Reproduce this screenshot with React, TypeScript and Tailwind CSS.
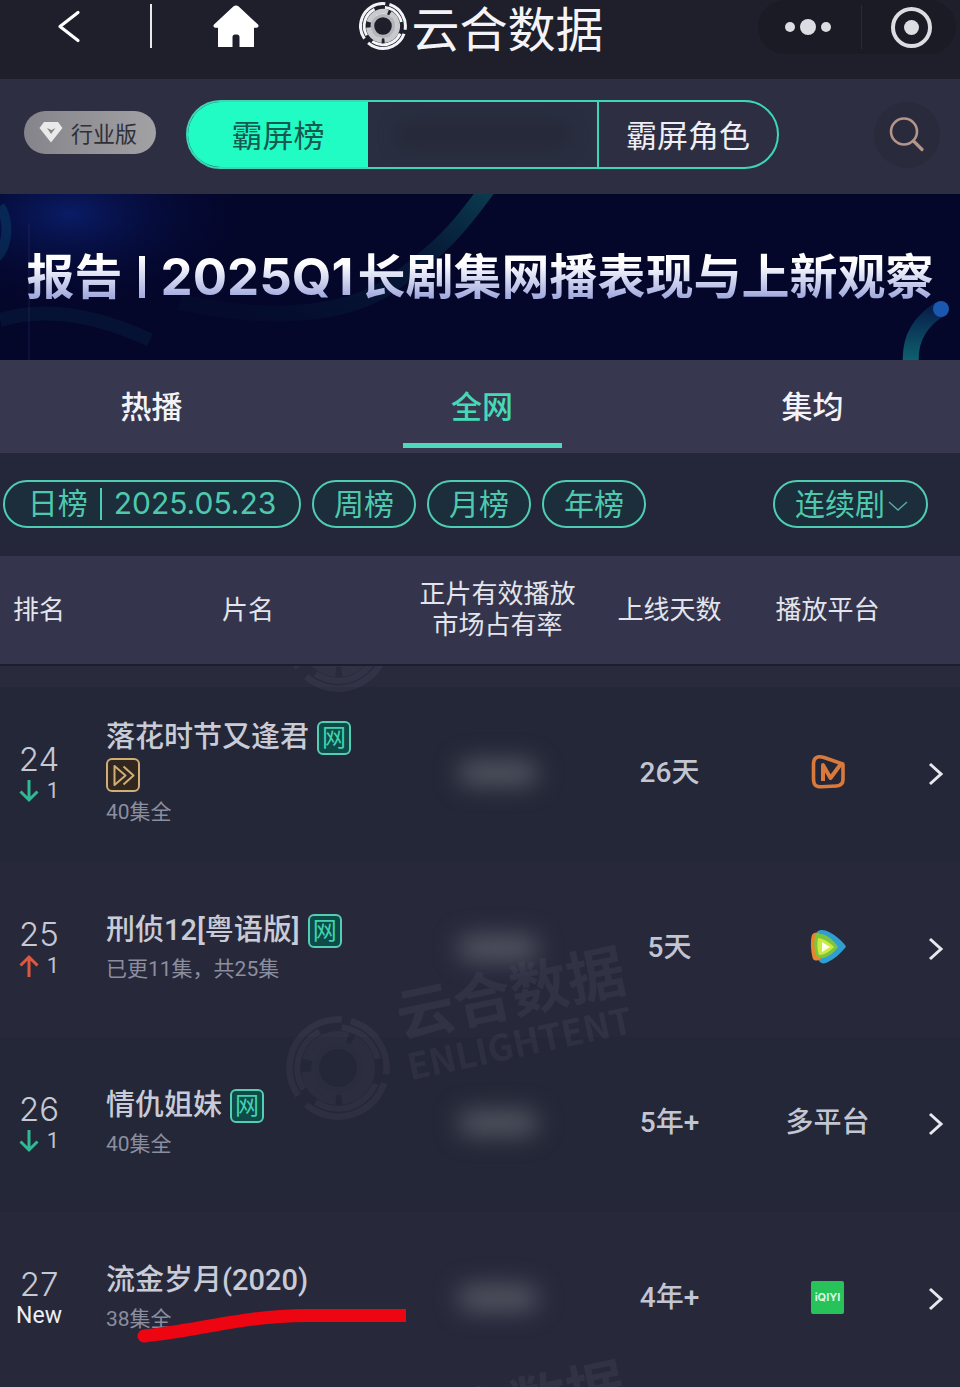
import clsx from "clsx";

type Show = {
  rank: number;
  change: "up" | "down" | "new";
  title: string;
  episodes: string;
  web?: boolean;
  vip?: boolean;
  days: string;
  platform: "mango" | "tencent" | "iqiyi" | "multi";
  marked?: boolean;
};

const shows: Show[] = [
  { rank: 24, change: "down", title: "落花时节又逢君", episodes: "40集全", web: true, vip: true, days: "26天", platform: "mango" },
  { rank: 25, change: "up", title: "刑侦12[粤语版]", episodes: "已更11集，共25集", web: true, days: "5天", platform: "tencent" },
  { rank: 26, change: "down", title: "情仇姐妹", episodes: "40集全", web: true, days: "5年+", platform: "multi" },
  { rank: 27, change: "new", title: "流金岁月(2020)", episodes: "38集全", days: "4年+", platform: "iqiyi", marked: true },
];

function SwirlLogo({ className }: { className?: string }) {
  return (
    <svg viewBox="0 0 48 48" className={className} fill="none" stroke="currentColor" aria-hidden="true">
      <circle cx="24" cy="24" r="22.4" strokeWidth="3" pathLength="100" strokeDasharray="31 4 36 3 23 3" transform="rotate(20 24 24)" />
      <circle cx="24" cy="24" r="18.8" strokeWidth="2.8" pathLength="100" strokeDasharray="26 9 20 10 28 7" transform="rotate(150 24 24)" />
      <circle cx="24" cy="24" r="14.6" strokeWidth="5" strokeOpacity="0.8" pathLength="100" strokeDasharray="40 3 22 6 26 3" transform="rotate(-60 24 24)" />
      <circle cx="24" cy="24" r="10.6" strokeWidth="3.6" strokeOpacity="0.7" />
    </svg>
  );
}

function NavBar() {
  return (
    <header className="grid h-[79px] grid-cols-[1fr_auto_1fr] items-start bg-[#1e1f2a]">
      <div className="flex h-[52px] items-center pl-14">
        <button aria-label="返回">
          <svg viewBox="0 0 26 34" className="h-[34px] w-[26px]" fill="none" stroke="white" strokeWidth="3.2" aria-hidden="true">
            <path d="M22 3.500 4 17.500 22 31.500" strokeLinecap="round" strokeLinejoin="round" />
          </svg>
        </button>
        <span className="ml-17 h-[44px] w-[2px] bg-[#e9e9ee]"></span>
        <button aria-label="首页" className="ml-15">
          <svg viewBox="0 0 48 44" className="h-11 w-12" fill="white" aria-hidden="true">
            <path d="M24 1.500c1 0 1.900.4 2.700 1.100L46 20.500c1.200 1.200.4 3.200-1.300 3.200H42V43H27.500V33c0-1.500-1-2.500-2.500-2.500h-2c-1.500 0-2.500 1-2.500 2.500v10H6V23.700H3.300C1.600 23.700.8 21.700 2 20.500L21.300 2.600C22.100 1.900 23 1.500 24 1.500z" />
          </svg>
        </button>
      </div>

      <h1 className="flex h-[52px] items-center gap-1 pl-[3px] text-[48px] leading-[52px] font-normal text-[#f4f4f8]">
        <SwirlLogo className="size-[48px]" />
        云合数据
      </h1>

      <div className="mr-1 flex h-[54px] items-center justify-self-end rounded-full bg-[#1b1b25]">
        <button aria-label="更多" className="flex h-full w-[103px] items-center justify-center gap-[5px] pr-1">
          <span className="size-[10px] rounded-full bg-[#dcdce2]"></span>
          <span className="size-4 rounded-full bg-[#dcdce2]"></span>
          <span className="size-[10px] rounded-full bg-[#dcdce2]"></span>
        </button>
        <span className="h-11 w-px bg-[#2b2b36]"></span>
        <button aria-label="关闭" className="flex h-full w-[94px] items-center justify-center pl-1">
          <span className="flex size-[41px] items-center justify-center rounded-full border-4 border-[#dcdce2]">
            <span className="size-[15px] rounded-full bg-[#dcdce2]"></span>
          </span>
        </button>
      </div>
    </header>
  );
}

function ModeBar() {
  return (
    <div className="flex h-[115px] items-center bg-[#2d2e42] pr-5 pb-1 pl-6">
      <button className="mb-[5px] flex h-[43px] w-[132px] items-center justify-center gap-2 rounded-full bg-linear-to-r from-[#84848a] to-[#a2a2a5] pr-1 text-[22px] text-[#2f3038]">
        <svg viewBox="0 0 24 22" className="h-[22px] w-6" aria-hidden="true">
          <path d="M5 1h14l4.500 6L12 21.500.5 7z" fill="#e9e9ea" />
          <path d="m8 7 4 6 4.500-6-4 2z" fill="#85858a" />
        </svg>
        行业版
      </button>

      <div className="ml-[30px] flex h-[69px] overflow-hidden rounded-full border-2 border-[#3ed6b4] text-[31px]">
        <button className="w-[180px] bg-[#20fcc4] text-[#16594f]">霸屏榜</button>
        <button aria-label="榜单" className="flex w-[229px] items-center justify-center bg-[#292e41]">
          <span className="h-7 w-44 rounded-full bg-[#262938] blur-sm"></span>
        </button>
        <button className="w-[180px] border-l-2 border-[#3ed6b4] text-[#eeeef4]">霸屏角色</button>
      </div>

      <button aria-label="搜索" className="ml-auto flex size-[66px] items-center justify-center rounded-full bg-[#292a3b]">
        <svg viewBox="0 0 36 36" className="size-9" fill="none" stroke="#b3958a" aria-hidden="true">
          <circle cx="15" cy="14.500" r="13" strokeWidth="2.600" />
          <path d="m24.500 24 8.500 8.500" strokeWidth="3.200" strokeLinecap="round" />
        </svg>
      </button>
    </div>
  );
}

function ReportBanner() {
  return (
    <a href="#report" className="relative flex h-[166px] items-center justify-center overflow-hidden bg-[#04062a]">
      <svg viewBox="0 0 960 166" preserveAspectRatio="xMidYMid slice" className="absolute inset-0 size-full" fill="none" aria-hidden="true">
        <defs>
          <radialGradient id="glow">
            <stop offset="0" stopColor="#0a1c66" />
            <stop offset="1" stopColor="#04062a" stopOpacity="0" />
          </radialGradient>
          <linearGradient id="ribbon" x1="0" y1="0.6" x2="1" y2="0">
            <stop offset="0" stopColor="#0a3a4c" stopOpacity="0.1" />
            <stop offset="0.6" stopColor="#0a3a4c" stopOpacity="0.35" />
            <stop offset="1" stopColor="#0d4a5a" stopOpacity="0.8" />
          </linearGradient>
          <linearGradient id="hook" x1="0" y1="1" x2="0" y2="0">
            <stop offset="0" stopColor="#0f6570" />
            <stop offset="1" stopColor="#08204c" />
          </linearGradient>
        </defs>
        <ellipse cx="70" cy="20" rx="190" ry="100" fill="url(#glow)" />
        <path d="M0 12c10 16 8 40-4 52" stroke="#0a4a70" strokeOpacity="0.4" strokeWidth="10" />
        <path d="M0 126C40 114 90 118 150 146" stroke="#083850" strokeOpacity="0.25" strokeWidth="14" />
        <path d="M180 108c90 20 170 14 215-20S455 40 488-6" stroke="url(#ribbon)" strokeWidth="16" />
        <path d="M29 30v136" stroke="#2a3668" strokeOpacity="0.5" />
        <path d="M911 170c-2-24 8-42 29-55" stroke="url(#hook)" strokeWidth="16" />
        <circle cx="941" cy="115" r="8" fill="#1a57ae" />
      </svg>
      <span className="relative flex items-center bg-linear-to-b from-white from-30% to-[#a3abde] to-80% bg-clip-text font-[Inter,'Noto_Sans_CJK_SC',sans-serif] text-[48px] leading-[66px] font-bold whitespace-nowrap text-transparent">
        报告
        <span className="mx-4 h-[42px] w-[6px] bg-linear-to-b from-white to-[#a3abde]"></span>
        <span className="mr-1 text-[51px]">2025Q1</span>
        长剧集网播表现与上新观察
      </span>
    </a>
  );
}

function ScopeTabs() {
  const tabs = ["热播", "全网", "集均"];
  return (
    <nav className="flex h-[93px] justify-between bg-[#37374f] pr-[68px] pb-[5px] pl-[72px] text-[31px] font-medium">
      {tabs.map((tab) => (
        <button
          key={tab}
          className={clsx(
            "w-[159px] border-b-[5px] pt-2",
            tab === "全网" ? "border-[#4fd8bb] text-[#45d9b6]" : "border-transparent text-[#f3f3f7]",
          )}
        >
          {tab}
        </button>
      ))}
    </nav>
  );
}

function Filters() {
  return (
    <div className="flex h-[103px] items-center gap-[11px] bg-[#242739] pr-8 pb-[2px] pl-[3px] font-[Inter,'Noto_Sans_CJK_SC',sans-serif] text-[30px] text-[#4fc9ae]">
      <button className="flex h-12 w-[298px] items-center justify-center gap-3 rounded-full border-2 border-[#4ecdb2] bg-[#1c2e3b]">
        日榜
        <span className="h-8 w-[2px] bg-[#4ecdb2]"></span>
        2025.05.23
      </button>
      {["周榜", "月榜", "年榜"].map((label) => (
        <button key={label} className="h-12 w-[104px] rounded-full border-2 border-[#4ecdb2] bg-[#1c2e3b] leading-[40px]">
          {label}
        </button>
      ))}
      <div className="relative ml-auto">
        <select
          aria-label="剧集类型"
          className="h-12 w-[155px] appearance-none rounded-full border-2 border-[#4ecdb2] bg-[#1c2e3b] pl-5 leading-[40px]"
        >
          <option>连续剧</option>
        </select>
        <svg viewBox="0 0 20 12" className="pointer-events-none absolute top-5 right-5 h-3 w-5" fill="none" stroke="#59a99c" strokeWidth="1.500" aria-hidden="true">
          <path d="m1 2 9 8 9-8" />
        </svg>
      </div>
    </div>
  );
}

function RankChange({ change }: { change: Show["change"] }) {
  if (change === "new") {
    return <span className="block text-[23px] leading-7 font-normal text-[#eeeff4]">New</span>;
  }
  const up = change === "up";
  return (
    <span className="flex h-7 items-center justify-center gap-2 text-[22px] font-normal text-[#c0c2cf]">
      <svg viewBox="0 0 20 24" className="h-6 w-5" fill="none" stroke={up ? "#e0573f" : "#2fb994"} strokeWidth="3" aria-hidden="true">
        <path d={up ? "M10 23V3M1.500 11.500 10 3l8.500 8.500" : "M10 1v20M1.500 12.500 10 21l8.500-8.500"} />
      </svg>
      1
    </span>
  );
}

function PlatformLogo({ platform }: { platform: Show["platform"] }) {
  if (platform === "multi") return <>多平台</>;
  if (platform === "iqiyi") {
    return (
      <span className="mb-1 inline-flex size-[33px] items-center justify-center rounded-[2px] bg-[#27c25a] align-middle font-[Inter,sans-serif] text-[11px] leading-4 font-bold text-[#d9f7e2]">
        iQIYI
      </span>
    );
  }
  if (platform === "tencent") {
    return (
      <svg viewBox="0 0 38 36" className="mb-1 inline h-9 w-[38px]" role="img" aria-label="腾讯视频">
        <path d="M8 3c3-3 8-2 12 0 6 3 12 8 16 13 1 1 1 2 0 3-5 6-11 11-17 14-3 2-7 2-9-1z" fill="#2e9fd0" />
        <path d="M3 6c1-2 4-3 7-2l2 26c-3 2-6 2-8 0C2 24 1 12 3 6z" fill="#e8862c" />
        <path d="M7 5c8-2 17 5 22 13-6 8-13 12-20 11C5 24 4 12 7 5z" fill="#7cc53f" />
        <path d="M9 9c7 1 12 5 16 9-4 4-9 8-15 8-2-5-2-12-1-17z" fill="#c9ea3f" />
        <path d="m13 13 8 5-8 5z" fill="#fdfff0" />
      </svg>
    );
  }
  return (
    <svg viewBox="0 0 36 36" className="mb-1 inline size-9" fill="none" stroke="#d97a3c" role="img" aria-label="芒果TV">
      <path d="M34 10.500 14 3.500C7 1.500 3.500 4 3.500 10v14c0 7 2 9 8 8.800l15-.8c4.500-.3 6.500-2.500 6.500-6.500V10" strokeWidth="3.600" strokeLinejoin="round" />
      <path d="M13 27V11l7.500 13 10-13.500" strokeWidth="4" strokeLinejoin="round" />
    </svg>
  );
}

function ShowRow({ show }: { show: Show }) {
  return (
    <tr className="h-[175px] bg-[#232737] odd:bg-[#27293b] *:pb-1">
      <td>
        <span className="block font-[Inter,sans-serif] text-[33px] leading-9 font-light text-[#c6c8d4]">{show.rank}</span>
        <RankChange change={show.change} />
      </td>
      <td className="relative pl-7 text-left">
        <div className="flex h-9 items-center gap-2 text-[29px] font-medium text-[#c9cbd7]">
          {show.title}
          {show.web && (
            <span className="flex size-[34px] items-center justify-center rounded-md border-2 border-[#55cdb2] bg-[#0d4a48] text-[24px] leading-[30px] font-normal text-[#41d3ae]">
              网
            </span>
          )}
        </div>
        {show.vip && (
          <svg viewBox="0 0 34 34" className="mt-[2px] size-[34px]" fill="none" stroke="#cfae78" strokeWidth="2" role="img" aria-label="会员">
            <rect x="1" y="1" width="32" height="32" rx="5" fill="#32271f" />
            <path d="M8.500 8v19l11-9.500zM17.500 8.500l10 9-10 9" strokeLinejoin="round" />
          </svg>
        )}
        <p className="mt-[6px] text-[21px] leading-7 font-normal text-[#8b8e9f]">{show.episodes}</p>
        {/* hand-drawn highlight under the title */}
        {show.marked && (
          <svg viewBox="0 0 272 36" className="absolute top-[95px] left-[58px] h-9 w-[272px]" fill="none" aria-hidden="true">
            <path d="M8 29C60 24 106 9 170 8.500H270" stroke="#ee0512" strokeWidth="13" />
            <circle cx="8" cy="29" r="6.500" fill="#ee0512" />
          </svg>
        )}
      </td>
      <td>
        <span className="mx-auto block h-6 w-20 rounded-full bg-[#555863] blur-md"></span>
      </td>
      <td>{show.days}</td>
      <td>
        <PlatformLogo platform={show.platform} />
      </td>
      <td className="pr-4 text-right">
        <button aria-label={`查看${show.title}`} className="align-middle">
          <svg viewBox="0 0 16 24" className="h-6 w-4" fill="none" stroke="#e8e9ef" strokeWidth="3" aria-hidden="true">
            <path d="m2 2 11 10L2 22" />
          </svg>
        </button>
      </td>
    </tr>
  );
}

function Watermark({ className, name, latin }: { className: string; name?: string; latin?: string }) {
  return (
    <div className={clsx("absolute left-[286px] flex h-[170px] w-[370px] items-start text-[#5a566c] opacity-20", className)}>
      <SwirlLogo className="mt-[66px] size-[104px] shrink-0" />
      <div className="mt-2 min-h-[104px] -rotate-12 pl-2 font-bold">
        {name && <p className="text-[58px] leading-[64px]">{name}</p>}
        {latin && <p className="text-[36px] leading-10">{latin}</p>}
      </div>
    </div>
  );
}

function Ranking() {
  return (
    <div className="relative">
      <table className="w-full table-fixed border-separate border-spacing-0 text-center font-[Roboto,'Noto_Sans_CJK_SC',sans-serif]">
        <colgroup>
          <col className="w-[78px]" />
          <col />
          <col className="w-[159px]" />
          <col className="w-[185px]" />
          <col className="w-[131px]" />
          <col className="w-[67px]" />
        </colgroup>
        <thead>
          <tr className="h-[110px] bg-[#34354c] text-[26px] leading-[31px] text-[#e3e4ec] *:border-b-2 *:border-[#1d1e2d]">
            <th className="font-normal">排名</th>
            <th className="font-normal">片名</th>
            <th className="font-normal whitespace-nowrap">
              正片有效播放
              <br />
              市场占有率
            </th>
            <th className="font-normal">上线天数</th>
            <th className="font-normal">播放平台</th>
            <td></td>
          </tr>
        </thead>
        <tbody className="text-[28px] font-medium text-[#c3c5d2]">
          {/* tail of the row scrolled under the header */}
          <tr className="h-[21px] bg-[#292b3d]" aria-hidden="true">
            <td colSpan={6}></td>
          </tr>
          {shows.map((show) => (
            <ShowRow key={show.rank} show={show} />
          ))}
        </tbody>
      </table>
      <div className="pointer-events-none absolute inset-x-0 top-[110px] bottom-0 overflow-hidden" aria-hidden="true">
        <Watermark className="-top-[144px]" />
        <Watermark className="top-[284px]" name="云合数据" latin="ENLIGHTENT" />
        <Watermark className="top-[698px]" name="云合数据" />
      </div>
    </div>
  );
}

export default function App() {
  return (
    <main className="min-h-screen bg-[#27293b] font-['Noto_Sans_CJK_SC',sans-serif]">
      <NavBar />
      <ModeBar />
      <ReportBanner />
      <ScopeTabs />
      <Filters />
      <Ranking />
    </main>
  );
}
